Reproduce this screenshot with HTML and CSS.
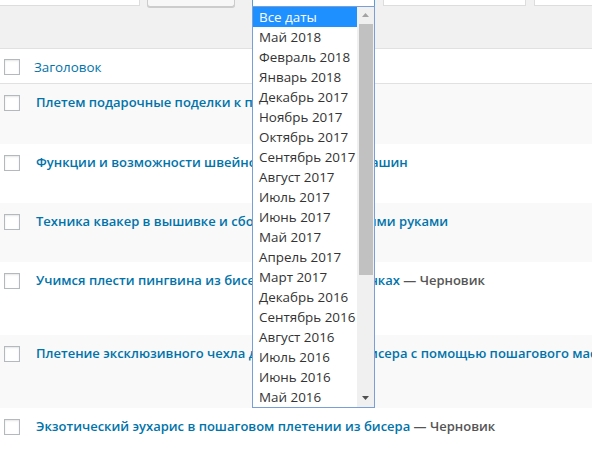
FILE: index.html
```html
<!DOCTYPE html>
<html lang="ru">
<head>
<meta charset="utf-8">
<title>Записи</title>
<link rel="stylesheet" href="styles.css">
</head>
<body>
<div class="toolbar">
  <div class="search"></div>
  <div class="btn"></div>
  <div class="select-wrap">
    <div class="select"></div>
    <div class="listbox">
      <ul class="options">
        <li class="opt selected">Все даты</li>
        <li class="opt">Май 2018</li>
        <li class="opt">Февраль 2018</li>
        <li class="opt">Январь 2018</li>
        <li class="opt">Декабрь 2017</li>
        <li class="opt">Ноябрь 2017</li>
        <li class="opt">Октябрь 2017</li>
        <li class="opt">Сентябрь 2017</li>
        <li class="opt">Август 2017</li>
        <li class="opt">Июль 2017</li>
        <li class="opt">Июнь 2017</li>
        <li class="opt">Май 2017</li>
        <li class="opt">Апрель 2017</li>
        <li class="opt">Март 2017</li>
        <li class="opt">Декабрь 2016</li>
        <li class="opt">Сентябрь 2016</li>
        <li class="opt">Август 2016</li>
        <li class="opt">Июль 2016</li>
        <li class="opt">Июнь 2016</li>
        <li class="opt">Май 2016</li>
      </ul>
      <div class="scrollbar">
        <svg class="arrow arrow-up" width="17" height="17" viewBox="0 0 17 17"><polygon points="5,10 12,10 8.5,6" fill="#a3a3a3"/></svg>
        <div class="thumb"></div>
        <svg class="arrow arrow-down" width="17" height="17" viewBox="0 0 17 17"><polygon points="5,6 12,6 8.5,10" fill="#505050"/></svg>
      </div>
    </div>
  </div>
  <div class="box box-cat"></div>
  <div class="box box-last"></div>
</div>

<div class="table">
  <div class="thead">
    <span class="cb"></span>
    <span class="th">Заголовок</span>
  </div>
  <div class="row alt h60">
    <span class="cb"></span>
    <span class="title">Плетем подарочные поделки к праздникам</span>
  </div>
  <div class="row h59">
    <span class="cb"></span>
    <span class="title">Функции и возможности швейно-вышивальных машин</span>
  </div>
  <div class="row alt h59">
    <span class="cb"></span>
    <span class="title">Техника квакер в вышивке и сборке картинок своими руками</span>
  </div>
  <div class="row h73">
    <span class="cb"></span>
    <span class="title">Учимся плести пингвина из бисера: схема в картинках <span class="state">— Черновик</span></span>
  </div>
  <div class="row alt h73">
    <span class="cb"></span>
    <span class="title">Плетение эксклюзивного чехла для телефона из бисера с помощью пошагового мастер-класса</span>
  </div>
  <div class="row h59">
    <span class="cb"></span>
    <span class="title">Экзотический эухарис в пошаговом плетении из бисера <span class="state">— Черновик</span></span>
  </div>
</div>
</body>
</html>
```

FILE: styles.css
```css
html, body {
  margin: 0;
  padding: 0;
}
body {
  width: 592px;
  height: 457px;
  overflow: hidden;
  background: #f1f1f1;
  font-family: "Open Sans", "Noto Sans", sans-serif;
  color: #444;
}

/* ---------- top toolbar ---------- */
.toolbar {
  height: 48px;
  display: flex;
  align-items: flex-start;
  position: relative;
  z-index: 2;
}
.search {
  box-sizing: border-box;
  width: 141px;
  height: 6px;
  margin-left: -1px;
  background: #fff;
  border: 1px solid #ddd;
  border-top: 0;
  flex: none;
}
.btn {
  box-sizing: border-box;
  width: 88px;
  height: 7px;
  margin-left: 7px;
  background: #f7f7f7;
  border: 1px solid #ccc;
  border-top: 0;
  border-radius: 0 0 3px 3px;
  box-shadow: 0 1px 0 #ccc;
  flex: none;
}
.select-wrap {
  position: relative;
  width: 123px;
  margin-left: 17px;
  flex: none;
}
.select {
  box-sizing: border-box;
  height: 7px;
  background: #fff;
  border: 1px solid #5b9dd9;
  border-top: 0;
}
.listbox {
  position: absolute;
  top: 6px;
  left: 0;
  box-sizing: border-box;
  width: 123px;
  height: 402px;
  border: 1px solid #7a9ed6;
  background: #fff;
  display: flex;
}
.options {
  list-style: none;
  margin: 0;
  padding: 0;
  width: 104px;
  flex: none;
}
.opt {
  height: 20px;
  line-height: 20px;
  padding-left: 6px;
  font-size: 13.4px;
  color: #333;
  white-space: nowrap;
}
.opt.selected {
  background: #1e90ff;
  color: #fff;
}
.scrollbar {
  position: relative;
  width: 17px;
  flex: none;
  background: #f0f0f0;
}
.arrow {
  position: absolute;
  left: 0;
  display: block;
}
.arrow-up { top: 0; }
.arrow-down { bottom: 0; }
.thumb {
  position: absolute;
  left: 2px;
  top: 17px;
  width: 14px;
  height: 251px;
  background: #c1c1c1;
}
.box {
  box-sizing: border-box;
  height: 6px;
  background: #fff;
  border: 1px solid #ddd;
  border-top: 0;
  flex: none;
}
.box-cat {
  width: 143px;
  margin-left: 8px;
}
.box-last {
  width: 100px;
  margin-left: 8px;
}

/* ---------- list table ---------- */
.table {
  background: #fff;
  border-top: 1px solid #e1e1e1;
}
.thead {
  display: flex;
  align-items: flex-start;
  height: 34px;
  border-bottom: 1px solid #e1e1e1;
  background: #fff;
}
.thead .cb {
  margin-top: 10px;
}
.th {
  margin-top: 8px;
  margin-left: 14px;
  line-height: 20px;
  font-size: 13.4px;
  color: #0073aa;
  white-space: nowrap;
}
.row {
  display: flex;
  align-items: flex-start;
  background: #fff;
}
.row.alt {
  background: #f9f9f9;
}
.h59 { height: 59px; }
.h60 { height: 60px; }
.h73 { height: 73px; }
.cb {
  box-sizing: border-box;
  width: 16px;
  height: 16px;
  margin-left: 4px;
  margin-top: 11px;
  border: 1px solid #b4b9be;
  background: #fff;
  box-shadow: inset 0 1px 2px rgba(0, 0, 0, 0.1);
  flex: none;
}
.title {
  margin-top: 8px;
  margin-left: 16px;
  line-height: 20px;
  font-size: 13px;
  font-weight: 600;
  color: #0073aa;
  white-space: nowrap;
}
.state {
  color: #555;
}
```
